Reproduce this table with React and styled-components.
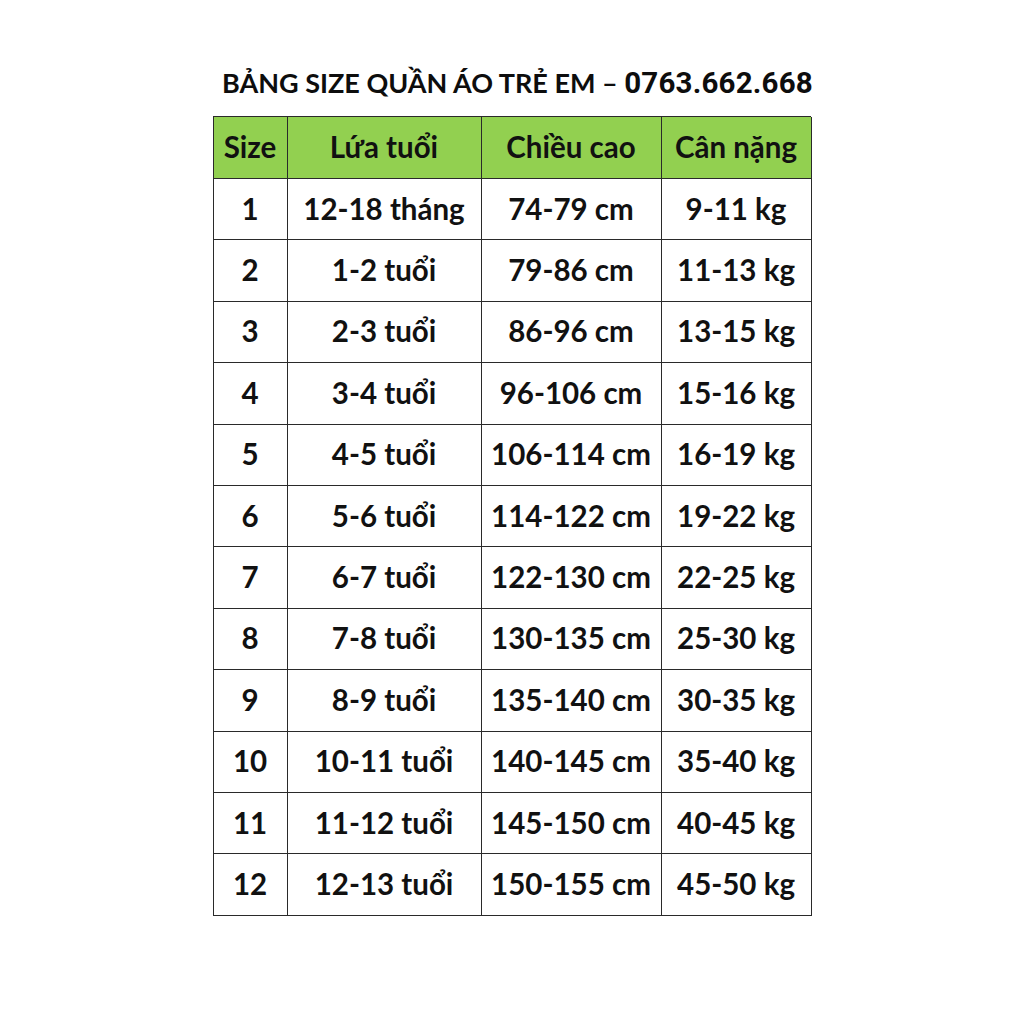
import React from 'react';
import styled, { createGlobalStyle } from 'styled-components';

const GlobalStyle = createGlobalStyle`
  html, body {
    margin: 0;
    padding: 0;
    background: #ffffff;
  }
  body {
    font-family: Lato, "Noto Sans", sans-serif;
    color: #111111;
  }
`;

const Page = styled.div`
  width: 1023px;
  height: 1023px;
  display: flex;
  flex-direction: column;
  align-items: center;
  padding-top: 66px;
  box-sizing: border-box;
`;

const Title = styled.h1`
  margin: 0 0 16px 12px;
  font-family: Lato, "Noto Sans", sans-serif;
  font-weight: 700;
  font-size: 27px;
  line-height: 34px;
  white-space: nowrap;
  color: #0d0d0d;
`;

const Phone = styled.span`
  font-family: Roboto, "Liberation Sans", sans-serif;
  font-weight: 700;
  font-size: 29.5px;
  letter-spacing: 0.2px;
`;

const Table = styled.div`
  display: grid;
  grid-template-columns: 74px 194px 180px 150px;
  width: 598px;
  border-top: 1px solid #2a2a2a;
  border-left: 1px solid #2a2a2a;
  box-sizing: border-box;
`;

const Cell = styled.div`
  height: ${(p) => (p.$head ? '62px' : '61.4px')};
  display: flex;
  align-items: center;
  justify-content: center;
  border-right: 1px solid #2a2a2a;
  border-bottom: 1px solid #2a2a2a;
  box-sizing: border-box;
  background: ${(p) => (p.$head ? '#92d050' : '#ffffff')};
  font-weight: 700;
  font-size: 29.5px;
  color: #111111;
  white-space: nowrap;
  padding-bottom: 2px;
`;

const headers = ['Size', 'Lứa tuổi', 'Chiều cao', 'Cân nặng'];

const rows = [
  ['1', '12-18 tháng', '74-79 cm', '9-11 kg'],
  ['2', '1-2 tuổi', '79-86 cm', '11-13 kg'],
  ['3', '2-3 tuổi', '86-96 cm', '13-15 kg'],
  ['4', '3-4 tuổi', '96-106 cm', '15-16 kg'],
  ['5', '4-5 tuổi', '106-114 cm', '16-19 kg'],
  ['6', '5-6 tuổi', '114-122 cm', '19-22 kg'],
  ['7', '6-7 tuổi', '122-130 cm', '22-25 kg'],
  ['8', '7-8 tuổi', '130-135 cm', '25-30 kg'],
  ['9', '8-9 tuổi', '135-140 cm', '30-35 kg'],
  ['10', '10-11 tuổi', '140-145 cm', '35-40 kg'],
  ['11', '11-12 tuổi', '145-150 cm', '40-45 kg'],
  ['12', '12-13 tuổi', '150-155 cm', '45-50 kg'],
];

export default function App() {
  return (
    <>
      <GlobalStyle />
      <Page>
        <Title>
          BẢNG SIZE QUẦN ÁO TRẺ EM – <Phone>0763.662.668</Phone>
        </Title>
        <Table>
          {headers.map((h) => (
            <Cell key={h} $head>
              {h}
            </Cell>
          ))}
          {rows.map((row) =>
            row.map((v, i) => <Cell key={row[0] + '-' + i}>{v}</Cell>)
          )}
        </Table>
      </Page>
    </>
  );
}
